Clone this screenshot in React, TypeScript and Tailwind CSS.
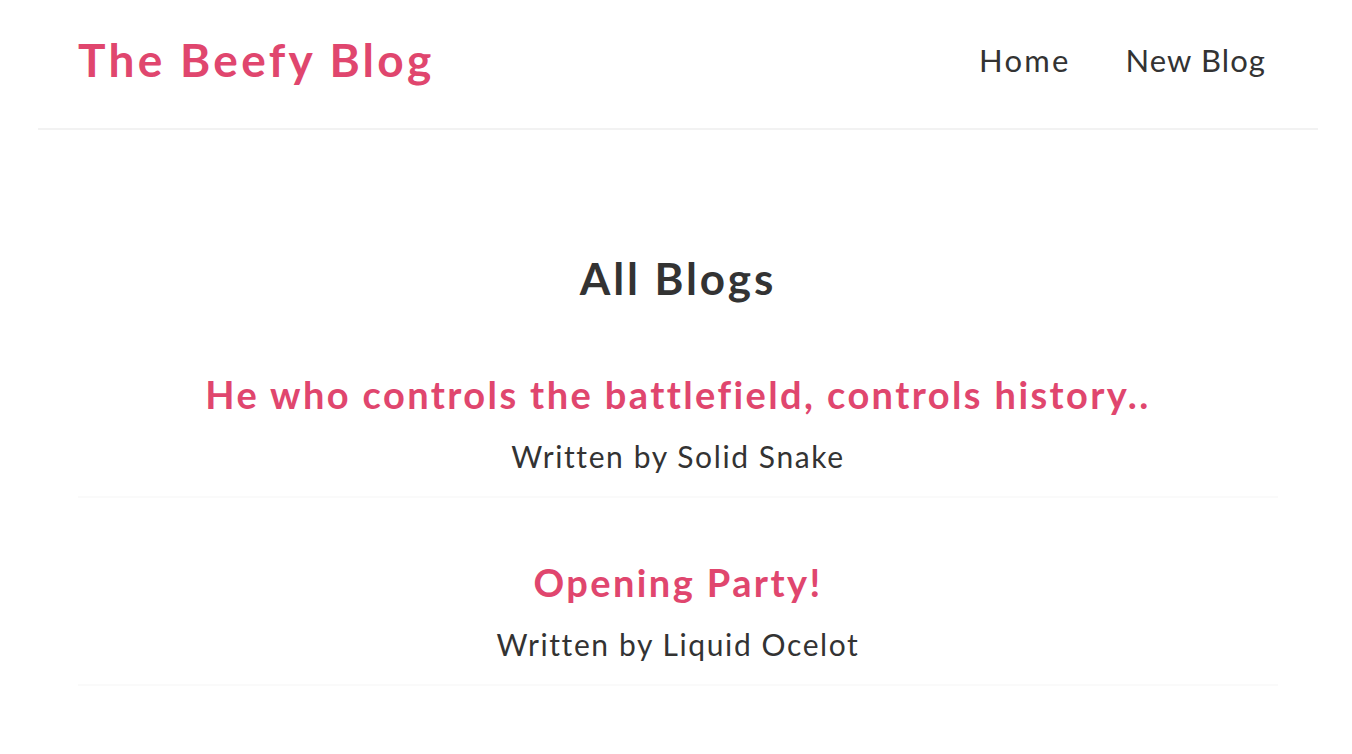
const blogs = [
  { id: 1, title: 'He who controls the battlefield, controls history..', author: 'Solid Snake' },
  { id: 2, title: 'Opening Party!', author: 'Liquid Ocelot' },
];

function Navbar() {
  return (
    <nav className="w-[1280px] mx-auto h-[130px] px-10 flex items-center justify-between border-b-2 border-[#f2f2f2]">
      <h1 className="text-[46px] font-bold text-[#e0466e] leading-none tracking-[3.3px] -mt-[8px]">The Beefy Blog</h1>
      <div className="flex items-center gap-[55px] pr-[12px] text-[31px] tracking-[1.5px] text-[#333] -mt-[8px]">
        <a href="/" className="tracking-[2.2px]">Home</a>
        <a href="/create" className="tracking-[1.1px]">New Blog</a>
      </div>
    </nav>
  );
}

export default function App() {
  return (
    <div className="min-h-screen bg-white pl-[4px]" style={{ fontFamily: 'Lato, sans-serif' }}>
      <Navbar />
      <div className="w-[1200px] mx-auto pt-[118px]">
        <h2 className="text-center text-[44px] font-bold text-[#333] leading-[60px] tracking-[2.9px]">All Blogs</h2>
        <div className="mt-[60px]">
          {blogs.map((blog) => (
            <div key={blog.id} className="text-center border-b-2 border-[#fafafa] pt-[12px] pb-[12px] first:pt-0 mb-[46px]">
              <h2 className="text-[38px] font-bold text-[#e0466e] leading-[52px] tracking-[2.4px]">{blog.title}</h2>
              <p className="text-[30px] text-[#333] leading-[56px] mt-[8px] tracking-[1.6px]">Written by {blog.author}</p>
            </div>
          ))}
        </div>
      </div>
    </div>
  );
}
